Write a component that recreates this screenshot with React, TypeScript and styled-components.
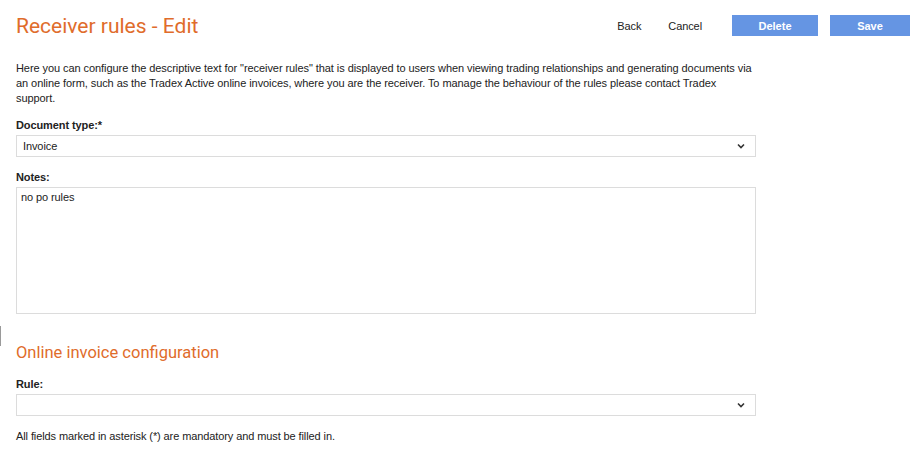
import styled, { createGlobalStyle } from "styled-components";

const GlobalStyle = createGlobalStyle`
  html, body {
    margin: 0;
    padding: 0;
    background: #ffffff;
    font-family: "Liberation Sans", Arial, sans-serif;
    color: #222222;
  }
`;

const ORANGE = "#e06c2b";
const BLUE = "#6595e3";
const BORDER = "#dcdcdc";

const Page = styled.div`
  position: relative;
  width: 913px;
  min-height: 460px;
  box-sizing: border-box;
  padding: 15px 3px 0 16px;
`;

const ScrollMark = styled.div`
  position: absolute;
  left: 0;
  top: 326px;
  width: 1px;
  height: 20px;
  background: #9a9a9a;
`;

const Header = styled.div`
  display: flex;
  align-items: flex-start;
  justify-content: space-between;
  height: 30px;
`;

const Title = styled.h1`
  margin: 0;
  font-family: Roboto, "Liberation Sans", sans-serif;
  font-weight: 400;
  font-size: 21px;
  line-height: 22px;
  color: ${ORANGE};
`;

const Actions = styled.div`
  display: flex;
  align-items: center;
`;

const LinkButton = styled.button<{ $gap: number }>`
  border: none;
  background: none;
  font-family: "Liberation Sans", Arial, sans-serif;
  font-size: 11px;
  letter-spacing: -0.1px;
  color: #222;
  height: 21px;
  padding: 0;
  margin-right: ${(p) => p.$gap}px;
  cursor: pointer;
`;

const PrimaryButton = styled.button<{ $width: number; $gap?: number }>`
  border: none;
  background: ${BLUE};
  color: #fff;
  font-family: "Liberation Sans", Arial, sans-serif;
  font-weight: 700;
  font-size: 11px;
  width: ${(p) => p.$width}px;
  height: 21px;
  padding: 0;
  margin-right: ${(p) => p.$gap ?? 0}px;
  cursor: pointer;
`;

const Form = styled.div`
  width: 740px;
  font-size: 11px;
  letter-spacing: -0.1px;
`;

const Intro = styled.p`
  margin: 16px 0 12px;
  line-height: 15px;
  letter-spacing: -0.07px;
  color: #222;
  width: 737px;
`;

const Field = styled.div`
  display: flex;
  flex-direction: column;
  gap: 3px;
  margin-bottom: 13px;
`;

const Label = styled.label`
  font-weight: 700;
  line-height: 14px;
  color: #222;
`;

const SelectBox = styled.div`
  display: flex;
  align-items: center;
  justify-content: space-between;
  height: 22px;
  box-sizing: border-box;
  border: 1px solid ${BORDER};
  padding: 0 10px 0 6px;
  color: #222;
`;

const TextArea = styled.div`
  height: 127px;
  box-sizing: border-box;
  border: 1px solid ${BORDER};
  padding: 3px 4px;
  color: #222;
`;

const SectionTitle = styled.h2`
  margin: 29px 0 14px;
  font-family: Roboto, "Liberation Sans", sans-serif;
  font-weight: 400;
  font-size: 16.5px;
  letter-spacing: 0;
  line-height: 20px;
  color: ${ORANGE};
`;

const Footnote = styled.p`
  margin: 0;
  line-height: 14px;
  color: #222;
`;

function Chevron() {
  return (
    <svg width="8" height="6" viewBox="0 0 8 6" aria-hidden>
      <path d="M1 1.5 L4 4.5 L7 1.5" fill="none" stroke="#333" strokeWidth="1.6" />
    </svg>
  );
}

function Select({ value }: { value: string }) {
  return (
    <SelectBox>
      <span>{value}</span>
      <Chevron />
    </SelectBox>
  );
}

export default function App() {
  return (
    <>
      <GlobalStyle />
      <Page>
        <ScrollMark />
        <Header>
          <Title>Receiver rules - Edit</Title>
          <Actions>
            <LinkButton $gap={27}>Back</LinkButton>
            <LinkButton $gap={30}>Cancel</LinkButton>
            <PrimaryButton $width={86} $gap={12}>Delete</PrimaryButton>
            <PrimaryButton $width={80}>Save</PrimaryButton>
          </Actions>
        </Header>
        <Form>
          <Intro>
            Here you can configure the descriptive text for "receiver rules" that is displayed to users when
            viewing trading relationships and generating documents via an online form, such as the Tradex
            Active online invoices, where you are the receiver. To manage the behaviour of the rules please
            contact Tradex support.
          </Intro>
          <Field>
            <Label>Document type:*</Label>
            <Select value="Invoice" />
          </Field>
          <Field>
            <Label>Notes:</Label>
            <TextArea>no po rules</TextArea>
          </Field>
          <SectionTitle>Online invoice configuration</SectionTitle>
          <Field>
            <Label>Rule:</Label>
            <Select value="" />
          </Field>
          <Footnote>All fields marked in asterisk (*) are mandatory and must be filled in.</Footnote>
        </Form>
      </Page>
    </>
  );
}
